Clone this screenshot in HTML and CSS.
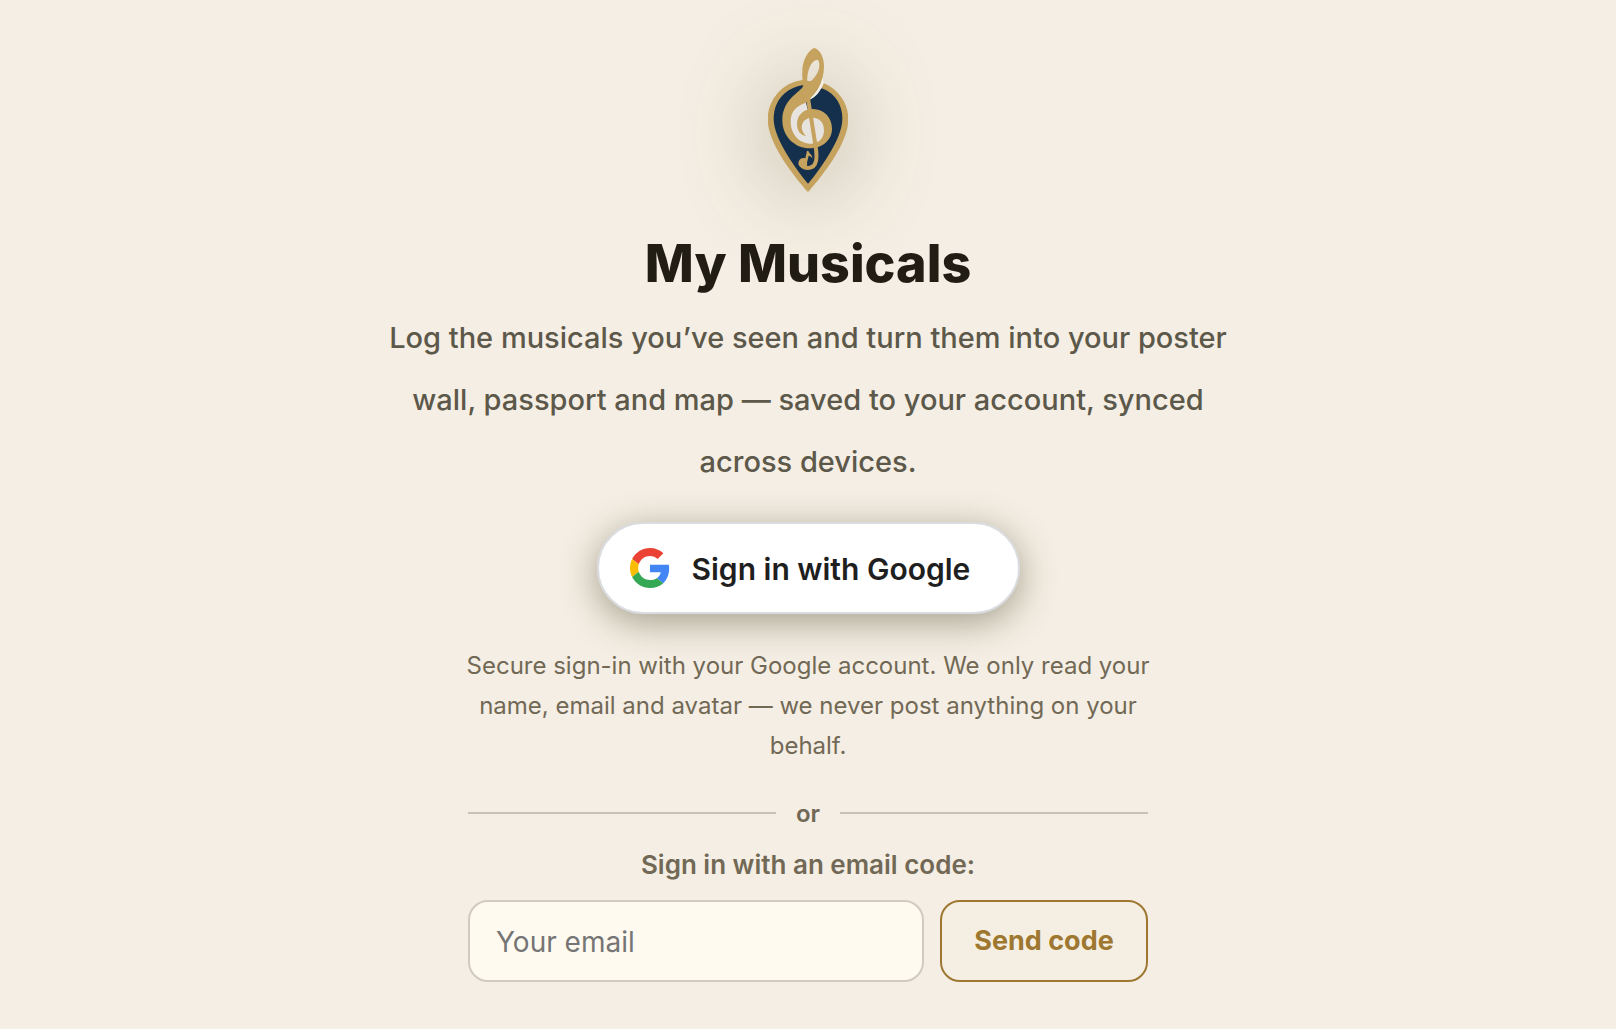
FILE: index.html
```html
<!DOCTYPE html>
<html lang="en">
<head>
<meta charset="utf-8">
<title>My Musicals</title>
<link rel="stylesheet" href="styles.css">
</head>
<body>
<main class="login">
  <svg class="logo" viewBox="54 36 240 438" aria-hidden="true">
    <path fill="#c5a25d" d="M174 471C140 433 53 328 53 253A120 118 0 0 1 157 135L222 145A120 118 0 0 1 295 253C295 328 208 433 174 471Z"/>
    <path fill="#14304c" d="M174 446C140 406 71 312 71 252C71 192 112 158 158 151L214 160C250 171 277 205 277 252C277 312 208 406 174 446Z"/>
    <path fill="#f3efe6" d="M222 143C212 168 198 186 178 195L182 187C200 168 212 150 218 128Z"/>
    <path fill="#e7e3de" d="M167 200L174 226L200 236C222 245 232 265 232 286C232 312 210 332 180 332C146 332 114 300 114 258C114 226 140 208 167 200Z"/>
    <path fill="#c5a25d" fill-rule="evenodd" d="M193 39C176 44 158 75 157 104C156 124 157 137 160 151C157 170 97 190 97 255C97 309 139 340 178 340C216 340 246 316 246 281C246 247 221 222 189 222C161 222 141 240 141 267C141 288 151 300 168 303C156 291 154 279 156 270C159 256 171 248 188 248C209 248 222 263 222 286C222 310 206 326 183 326C149 326 122 298 122 260C122 226 142 213 170 202C198 174 222 143 222 93C222 68 210 43 193 39ZM201 74C184 76 169 107 172 147C193 132 208 112 208 90C208 80 206 75 201 74Z"/>
    <path fill="none" stroke="#e7e3de" stroke-width="2.5" d="M177 250L188 325M189 250L201 318"/>
    <path fill="none" stroke="#c5a25d" stroke-width="12" d="M174 190L197 335C201 362 204 399 174 399C160 399 154 394 154 385"/>
    <path fill="#c5a25d" d="M145 384C146 373 156 367 166 370L171 347L176 349C177 357 187 357 187 371C184 364 179 362 176 362L171 383C174 394 166 400 157 398C149 396 145 391 145 384Z"/>
  </svg>
  <h1 class="title">My Musicals</h1>
  <p class="lead">Log the musicals you’ve seen and turn them into your poster wall, passport and map — saved to your account, synced across devices.</p>
  <button class="google" type="button">
    <svg class="google-mark" viewBox="0 0 48 48" aria-hidden="true">
      <path fill="#EA4335" d="M24 9.5c3.54 0 6.71 1.22 9.21 3.6l6.85-6.85C35.9 2.38 30.47 0 24 0 14.62 0 6.51 5.38 2.56 13.22l7.98 6.19C12.43 13.72 17.74 9.5 24 9.5z"/>
      <path fill="#4285F4" d="M46.98 24.55c0-1.57-.15-3.09-.38-4.55H24v9.02h12.94c-.58 2.96-2.26 5.48-4.78 7.18l7.73 6c4.51-4.18 7.09-10.36 7.09-17.65z"/>
      <path fill="#FBBC05" d="M10.53 28.59c-.48-1.45-.76-2.99-.76-4.59s.27-3.14.76-4.59l-7.98-6.19C.92 16.46 0 20.12 0 24c0 3.88.92 7.54 2.56 10.78l7.97-6.19z"/>
      <path fill="#34A853" d="M24 48c6.48 0 11.93-2.13 15.89-5.81l-7.73-6c-2.15 1.45-4.92 2.3-8.16 2.3-6.26 0-11.57-4.22-13.47-9.91l-7.98 6.19C6.51 42.62 14.62 48 24 48z"/>
    </svg>
    <span>Sign in with Google</span>
  </button>
  <p class="note">Secure sign-in with your Google account. We only read your name, email and avatar — we never post anything on your behalf.</p>
  <div class="divider"><span>or</span></div>
  <label class="email-label" for="email">Sign in with an email code:</label>
  <form class="email-form">
    <input class="email" id="email" type="email" placeholder="Your email">
    <button class="send" type="button">Send code</button>
  </form>
</main>
</body>
</html>
```
FILE: styles.css
```css
* { box-sizing: border-box; }
body {
  margin: 0;
  background: #f5eee4;
  color: #211d15;
  font-family: Inter, "Liberation Sans", sans-serif;
  overflow: hidden;
}
.login {
  display: flex;
  flex-direction: column;
  align-items: center;
  padding-top: 47px;
  text-align: center;
}
.logo {
  width: 80px;
  height: 146px;
  filter: drop-shadow(0 10px 44px rgba(66, 68, 25, .32));
}
.title {
  margin: 37px 0 0;
  font-size: 52px;
  line-height: 68px;
  font-weight: 800;
}
.lead {
  width: 860px;
  margin: 8.5px 0 0;
  color: #5c584a;
  font-size: 29px;
  line-height: 62px;
  font-weight: 500;
}
.google {
  display: flex;
  align-items: center;
  gap: 22px;
  width: 423px;
  height: 92px;
  margin-top: 29.5px;
  padding: 0 30px 0 31px;
  border: 2px solid #dadce0;
  border-radius: 46px;
  background: #fff;
  color: #1f1f1f;
  font: 600 30px Inter, "Liberation Sans", sans-serif;
  box-shadow: 0 8px 36px rgba(50, 50, 20, .42);
}
.google span { padding-top: 1px; }
.google-mark { width: 40px; height: 40px; }
.note {
  width: 700px;
  margin: 31.5px 0 0;
  color: #716955;
  font-size: 24px;
  line-height: 40px;
}
.divider {
  display: flex;
  align-items: center;
  gap: 20px;
  width: 680px;
  height: 40px;
  margin-top: 27.5px;
  color: #716955;
  font-size: 24px;
  line-height: 39px;
  font-weight: 600;
}
.divider::before,
.divider::after {
  content: "";
  flex: 1;
  height: 2px;
  background: #c6c3b4;
}
.email-label {
  margin-top: 11.5px;
  color: #716955;
  font-size: 26px;
  line-height: 40px;
  font-weight: 600;
}
.email-form {
  display: flex;
  gap: 16px;
  width: 680px;
  height: 82px;
  margin-top: 15.5px;
}
.email {
  flex: 1;
  min-width: 0;
  padding: 2px 26px 0;
  border: 2px solid #cfccbf;
  border-radius: 20px;
  background: #fffaf0;
  font: 400 28px Inter, "Liberation Sans", sans-serif;
}
.email::placeholder { color: #757575; }
.send {
  width: 208px;
  padding: 0 0 2px;
  border: 2px solid #9e7831;
  border-radius: 20px;
  background: #f5efe3;
  color: #9e7831;
  font: 700 27px Inter, "Liberation Sans", sans-serif;
}
```
